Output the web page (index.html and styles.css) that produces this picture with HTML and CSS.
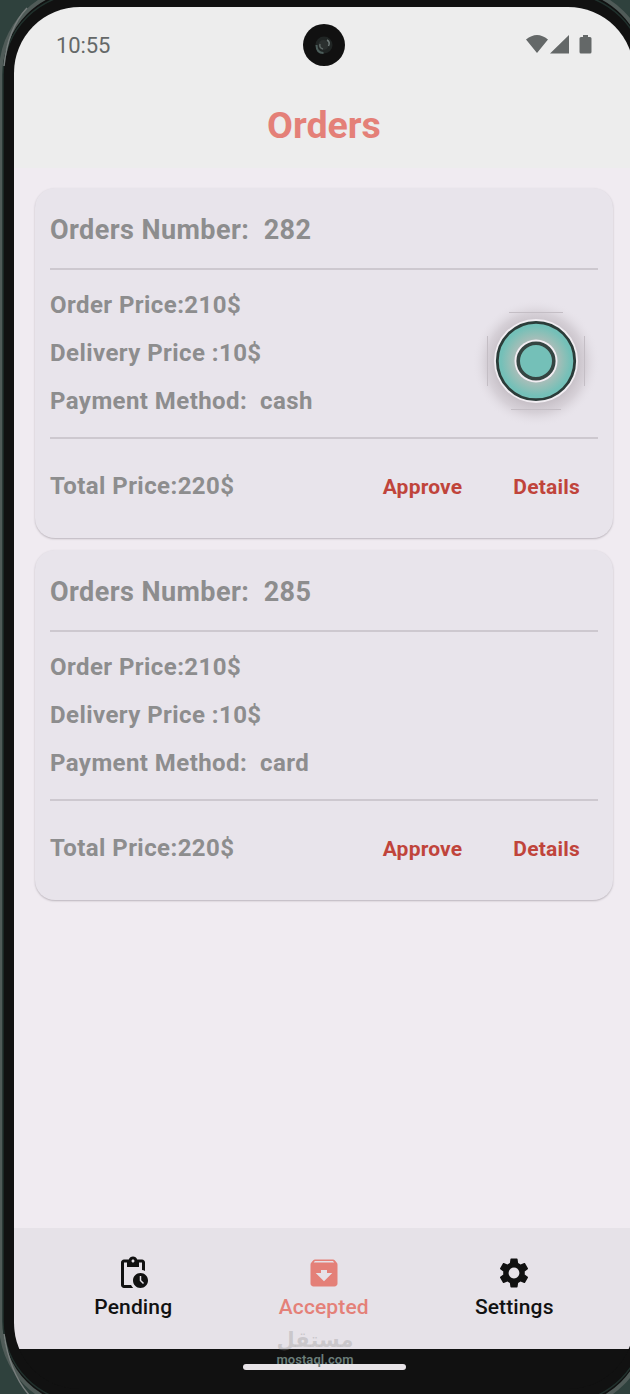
FILE: index.html
```html
<!DOCTYPE html>
<html lang="en">
<head>
<meta charset="utf-8">
<title>Orders</title>
<link rel="stylesheet" href="styles.css">
</head>
<body>
<div class="phone">
  <svg class="frame" viewBox="0 0 630 1394" aria-hidden="true">
    <rect width="630" height="1394" fill="#2f413d"/>
    <rect x="1" y="-12" width="646" height="1420" rx="84" fill="#111" stroke="#505b58" stroke-width="4"/>
    <rect x="3" y="-7" width="642" height="1410" rx="82" fill="#111" stroke="#20302c" stroke-width="1.500"/>
    <path d="M4 66Q8 28 27 8M4 1334q6 40 26 62" fill="none" stroke="#777d7c" stroke-width="1.500"/>
  </svg>
  <main class="screen">
    <header class="top">
      <div class="status">
        <span class="time">10:55</span>
        <svg class="signals" width="68" height="22" viewBox="0 0 68 22">
          <g fill="#646868"><path d="M1 5.500Q12-3.500 23 5.500L12 19ZM25 19.500 44 1v18.500zM56 3h2V1h5v2h2q1.500 0 1.500 1.500V18q0 1.500-1.500 1.500h-9q-1.500 0-1.500-1.500V4.500Q54.500 3 56 3z"/></g>
        </svg>
        <svg class="camera" viewBox="0 0 42 42">
          <circle cx="21" cy="21" r="21" fill="#111"/><circle cx="21" cy="21" r="8.500" fill="#202524"/>
          <circle cx="20.500" cy="21" r="5" fill="#2b302f"/>
          <path d="M13.500 21q0 8 7 8" fill="none" stroke="#4c5d5a" stroke-width="2"/>
          <path d="M24 16q3.500 2 1.500 6" fill="none" stroke="#707b79" stroke-width="1.500"/>
          <path d="M17 20q-1 4 3 5" fill="none" stroke="#5c6664" stroke-width="1.500"/>
        </svg>
      </div>
      <h1 class="title">Orders</h1>
    </header>
    <section class="orders">
      <article class="card">
        <h2 class="number">Orders Number:&nbsp; 282</h2>
        <div class="lines"><p>Order Price:210$</p><p>Delivery Price :10$</p><p>Payment Method:&nbsp; cash</p></div>
        <div class="foot"><span class="total">Total Price:220$</span><a class="approve">Approve</a><a class="details">Details</a></div>
        <svg class="touch" viewBox="0 0 130 130">
          <defs>
            <radialGradient id="halo"><stop offset=".6" stop-color="#c4bdc4"/><stop offset=".78" stop-color="#d2ccd3" stop-opacity=".8"/><stop offset="1" stop-color="#e8e4eb" stop-opacity="0"/></radialGradient>
            <radialGradient id="ring"><stop offset=".5" stop-color="#b0bdba"/><stop offset=".72" stop-color="#8fbfb7"/><stop offset=".9" stop-color="#74c0b8"/></radialGradient>
          </defs>
          <circle cx="65" cy="67" r="64" fill="url(#halo)"/>
          <path d="M38 16.500h54M40 113.500h50M16.500 40v50M113.500 40v50" stroke="#c4bec5" stroke-width="1"/>
          <circle cx="65" cy="65" r="42" fill="#f1edf2"/>
          <circle cx="65" cy="65" r="38.700" fill="url(#ring)" stroke="#2b3c39" stroke-width="2.800"/>
          <circle cx="65" cy="65" r="21.500" fill="#f1edf2"/>
          <circle cx="65" cy="65" r="17.800" fill="#74c0b8" stroke="#354542" stroke-width="3.600"/>
        </svg>
      </article>
      <article class="card">
        <h2 class="number">Orders Number:&nbsp; 285</h2>
        <div class="lines"><p>Order Price:210$</p><p>Delivery Price :10$</p><p>Payment Method:&nbsp; card</p></div>
        <div class="foot"><span class="total">Total Price:220$</span><a class="approve">Approve</a><a class="details">Details</a></div>
      </article>
    </section>
    <nav class="tabs">
      <a class="tab"><svg viewBox="0 0 24 24"><path d="M17 12c-2.760 0-5 2.240-5 5s2.240 5 5 5 5-2.240 5-5-2.240-5-5-5zm1.650 7.350L16.500 17.200V14h1v2.790l1.850 1.850-.7.710zM18 3h-3.180C14.400 1.840 13.300 1 12 1s-2.400.84-2.820 2H6c-1.100 0-2 .9-2 2v15c0 1.100.9 2 2 2h6.110a6.740 6.740 0 0 1-1.420-2H6V5h2v3h8V5h2v5.080c.71.100 1.380.310 2 .6V5c0-1.100-.9-2-2-2zm-6 2c-.55 0-1-.45-1-1s.45-1 1-1 1 .45 1 1-.45 1-1 1z"/></svg><span>Pending</span></a>
      <a class="tab active"><svg viewBox="0 0 24 24"><path d="M20.540 5.230l-1.390-1.680C18.880 3.210 18.470 3 18 3H6c-.47 0-.88.210-1.160.55L3.460 5.230C3.170 5.570 3 6.020 3 6.500V19c0 1.100.9 2 2 2h14c1.100 0 2-.9 2-2V6.500c0-.48-.17-.93-.46-1.270zM12 17.500 6.500 12H10v-2h4v2h3.500L12 17.500zM5.120 5l.81-1h12l.94 1H5.120z"/></svg><span>Accepted</span></a>
      <a class="tab"><svg viewBox="0 0 24 24"><path d="M19.140 12.940c.04-.3.060-.61.060-.94 0-.32-.02-.64-.07-.94l2.030-1.580c.18-.14.230-.41.120-.61l-1.920-3.320c-.12-.22-.37-.29-.59-.22l-2.390.96c-.5-.38-1.030-.7-1.620-.94l-.36-2.540c-.04-.24-.24-.41-.48-.41h-3.840c-.24 0-.43.170-.47.410l-.36 2.540c-.59.240-1.130.57-1.620.94l-2.390-.96c-.22-.08-.47 0-.59.220L2.740 8.870c-.12.210-.08.470.120.610l2.030 1.580c-.05.300-.09.630-.09.940s.02.640.070.940l-2.030 1.580c-.18.140-.23.410-.12.610l1.920 3.320c.12.220.37.290.59.220l2.390-.96c.5.380 1.030.7 1.620.94l.36 2.540c.05.240.240.410.480.410h3.840c.24 0 .44-.17.470-.41l.36-2.540c.59-.24 1.130-.56 1.620-.94l2.390.96c.22.080.47 0 .59-.22l1.920-3.320c.12-.22.070-.47-.12-.61l-2.010-1.580zM12 15.600c-1.980 0-3.600-1.620-3.600-3.600s1.620-3.600 3.600-3.600 3.600 1.620 3.600 3.600-1.620 3.600-3.600 3.600z"/></svg><span>Settings</span></a>
    </nav>
    <div class="gesture"><span class="handle"></span></div>
    <div class="watermark"><span class="arabic" lang="ar" dir="rtl">مستقل</span><span class="domain">mostaql.com</span></div>
  </main>
</div>
</body>
</html>
```
FILE: styles.css
```css
* { box-sizing: border-box; }
body { margin: 0; background: #111; font-family: Roboto, "Liberation Sans", sans-serif; }
h1, h2, p { margin: 0; }
.phone { position: relative; width: 630px; height: 1394px; overflow: hidden; padding: 7px 0 0 14px; }
.frame { position: absolute; inset: 0; width: 630px; height: 1394px; }
.screen { position: relative; width: 620px; height: 1382px; border-radius: 66px; overflow: hidden; background: #111; display: flex; flex-direction: column; }
.top { height: 161px; background: #ededed; flex: none; }
.status { position: relative; height: 76px; display: flex; justify-content: space-between; align-items: center; padding: 0 41px 0 42px; }
.time { font-size: 22px; color: #646868; letter-spacing: -.1px; }
.signals { display: block; }
.camera { position: absolute; left: 289px; top: 17px; width: 42px; height: 42px; }
.title { text-align: center; font-size: 37.600px; line-height: 84px; height: 85px; font-weight: 700; color: #e48078; }
.orders { flex: 1; padding: 20px 35px 0 21px; background: #f0ebf1; display: flex; flex-direction: column; gap: 12px; }
.card { position: relative; width: 578px; height: 350px; padding: 0 15px; border-radius: 20px; background: #e8e4eb; box-shadow: 0 1px 2px #bab4bb; font-weight: 700; color: #8d8d8e; }
.number { height: 82px; line-height: 85px; font-size: 27px; font-weight: 700; letter-spacing: .43px; border-bottom: 2px solid #cdc8cf; white-space: pre; }
.lines { height: 169px; padding-top: 11px; border-bottom: 2px solid #cdc8cf; font-size: 24px; line-height: 48px; letter-spacing: .43px; }
.foot { display: flex; align-items: center; height: 94px; font-size: 24px; letter-spacing: .43px; }
.total { flex: 1; }
.approve, .details { font-size: 21px; color: #c0443b; letter-spacing: .2px; padding-top: 2px; }
.approve { margin-right: 51px; }
.details { margin-right: 18px; }
.touch { position: absolute; left: 436px; top: 108px; width: 130px; height: 130px; }
.tabs { flex: none; height: 121px; padding: 0 24px; display: grid; grid-template-columns: repeat(3, 190.500px); background: #e6e2e8; }
.tab { display: flex; flex-direction: column; align-items: center; padding-top: 27px; font-size: 21px; line-height: 24px; font-weight: 500; letter-spacing: .12px; color: #111; }
.tab svg { width: 36px; height: 36px; fill: currentColor; margin-bottom: 4px; }
.active { color: #e48078; }
.gesture { flex: none; height: 40px; background: #111; display: flex; justify-content: center; padding-top: 15px; }
.handle { width: 163px; height: 6px; border-radius: 3px; background: #e8e4e8; }
.watermark { position: absolute; left: 261px; top: 1322px; width: 80px; display: flex; flex-direction: column; align-items: center; color: #6b7e7a; }
.arabic { font: 700 21px/23px "DejaVu Sans", sans-serif; color: rgba(150, 150, 150, .35); }
.domain { font-size: 13px; line-height: 15px; font-weight: 600; letter-spacing: .05px; }
```
